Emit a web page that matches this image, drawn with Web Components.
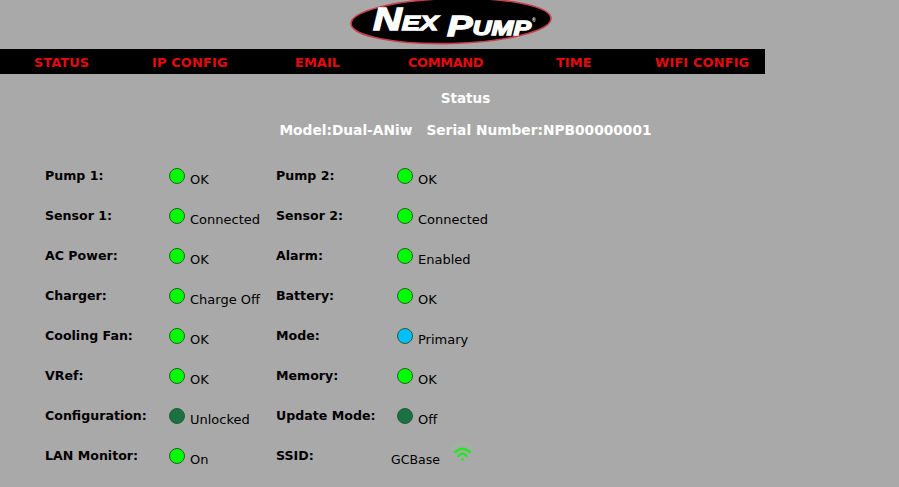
<!DOCTYPE html>
<html>
<head>
<meta charset="utf-8">
<style>
    html,body{margin:0;padding:0;background:#a9a9a9;}
    body{font-family:"DejaVu Sans",Verdana,sans-serif;height:487px;overflow:hidden;}
</style>
</head>
<body>
<np-header></np-header>
<np-nav>
    <a href="#" style="width:118px">STATUS</a>
    <a href="#" style="width:143px;letter-spacing:.1px">IP CONFIG</a>
    <a href="#" style="width:113px">EMAIL</a>
    <a href="#" style="width:148px;letter-spacing:-.45px">COMMAND</a>
    <a href="#" style="width:99px">TIME</a>
    <a href="#" style="letter-spacing:.1px">WIFI CONFIG</a>
</np-nav>
<np-title model="Dual-ANiw" serial="NPB00000001"></np-title>
<np-grid>
    <np-item label="Pump 1:" value="OK"></np-item>
    <np-item label="Pump 2:" value="OK"></np-item>
    <np-item label="Sensor 1:" value="Connected"></np-item>
    <np-item label="Sensor 2:" value="Connected"></np-item>
    <np-item label="AC Power:" value="OK"></np-item>
    <np-item label="Alarm:" value="Enabled"></np-item>
    <np-item label="Charger:" value="Charge Off"></np-item>
    <np-item label="Battery:" value="OK"></np-item>
    <np-item label="Cooling Fan:" value="OK"></np-item>
    <np-item label="Mode:" value="Primary" color="blue"></np-item>
    <np-item label="VRef:" value="OK"></np-item>
    <np-item label="Memory:" value="OK"></np-item>
    <np-item label="Configuration:" value="Unlocked" color="dark"></np-item>
    <np-item label="Update Mode:" value="Off" color="dark"></np-item>
    <np-item label="LAN Monitor:" value="On"></np-item>
    <np-ssid label="SSID:" value="GCBase"></np-ssid>
</np-grid>

<script>
const np_header = document.createElement('template');
np_header.innerHTML = `
    <style>
        :host{display:flex;justify-content:center;height:49px;padding-left:3px;}
        svg{display:block;}
        text{font-family:"Liberation Sans",Arial,sans-serif;font-weight:bold;font-style:italic;fill:#fff;}
    </style>
    <svg width="202" height="49" viewBox="0 0 202 49">
        <g transform="rotate(-1.5 101 21)">
            <ellipse cx="101" cy="21" rx="100" ry="22.5" fill="#000" stroke="#c8404c" stroke-width="1.6"/>
        </g>
        <text x="23" y="30" font-size="31" stroke="#fff" stroke-width="1.3" textLength="65" lengthAdjust="spacingAndGlyphs">N<tspan font-size="21">EX</tspan></text>
        <text x="97" y="36" font-size="29" stroke="#fff" stroke-width="1.3" textLength="84" lengthAdjust="spacingAndGlyphs">P<tspan font-size="20" dy="-1">UMP</tspan></text>
        <text x="182" y="22" font-size="5" style="font-style:normal">®</text>
    </svg>
`;
class npheader extends HTMLElement {
    constructor() {
        super();
        this.attachShadow({ mode: 'open' });
        this.shadowRoot.appendChild(np_header.content.cloneNode(true));
    }
}
window.customElements.define('np-header', npheader);

const np_nav = document.createElement('template');
np_nav.innerHTML = `
    <style>
        :host{display:flex;box-sizing:border-box;width:765px;height:25px;background:#000;padding:1px 0 0 34px;align-items:center;}
        ::slotted(a){color:#e30b0b;font:bold 13px "DejaVu Sans",Verdana,sans-serif;text-decoration:none;white-space:nowrap;}
    </style>
    <slot></slot>
`;
class npnav extends HTMLElement {
    constructor() {
        super();
        this.attachShadow({ mode: 'open' });
        this.shadowRoot.appendChild(np_nav.content.cloneNode(true));
    }
}
window.customElements.define('np-nav', npnav);

class nptitle extends HTMLElement {
    constructor() {
        super();
        this.attachShadow({ mode: 'open' });
        this.shadowRoot.innerHTML = `
            <style>
                :host{display:block;color:#fff;font-weight:bold;width:931px;text-align:center;}
                h1{font:inherit;font-size:13.5px;margin:0;padding-top:16px;line-height:17px;}
                p{margin:0;padding-top:15px;line-height:17px;font-size:13.75px;}
                span{margin-left:14px;}
            </style>
            <h1>Status</h1>
            <p>Model:${this.getAttribute('model')}<span>Serial Number:${this.getAttribute('serial')}</span></p>
        `;
    }
}
window.customElements.define('np-title', nptitle);

const np_grid = document.createElement('template');
np_grid.innerHTML = `
    <style>
        :host{display:grid;grid-template-columns:231px 300px;grid-auto-rows:40px;padding:28px 0 0 45px;}
    </style>
    <slot></slot>
`;
class npgrid extends HTMLElement {
    constructor() {
        super();
        this.attachShadow({ mode: 'open' });
        this.shadowRoot.appendChild(np_grid.content.cloneNode(true));
    }
}
window.customElements.define('np-grid', npgrid);

const np_item_css = `
    :host{display:flex;align-items:flex-start;height:40px;font-size:13px;color:#000;}
    :host(:nth-child(even)){--lab:121px;}
    .lab{width:var(--lab,124px);font-weight:bold;font-size:12.6px;line-height:17px;flex:none;}
    .val{line-height:17px;padding-top:4px;white-space:nowrap;}
`;
const np_colors = {
    green: '#00ff00',
    blue: '#00bfff',
    dark: '#1a7144'
};
class npitem extends HTMLElement {
    constructor() {
        super();
        this.attachShadow({ mode: 'open' });
        let cor = np_colors[this.getAttribute('color') || 'green'];
        this.shadowRoot.innerHTML = `
            <style>${np_item_css}
                .dot{width:14px;height:14px;border:1px solid #2a5a2a;border-radius:50%;background:${cor};margin:1px 5px 0 0;flex:none;}
            </style>
            <div class="lab">${this.getAttribute('label')}</div>
            <div class="dot"></div>
            <div class="val">${this.getAttribute('value')}</div>
        `;
    }
}
window.customElements.define('np-item', npitem);

class npssid extends HTMLElement {
    constructor() {
        super();
        this.attachShadow({ mode: 'open' });
        this.shadowRoot.innerHTML = `
            <style>${np_item_css}
                .lab{width:115px;}
                .val{width:60px;font-size:12.5px;}
                svg{display:block;margin-top:-8px;flex:none;}
            </style>
            <div class="lab">${this.getAttribute('label')}</div>
            <div class="val">${this.getAttribute('value')}</div>
            <svg width="24" height="24" viewBox="0 0 24 24" fill="none" stroke-linecap="round">
                <path d="M1.5 10 Q11.5 -1 21.5 10" stroke="#98bb98" stroke-width="1.8"/>
                <path d="M4 13 Q11.5 6.5 19 13" stroke="#22e822" stroke-width="2.6"/>
                <path d="M7.5 17 Q11.5 12 15.5 17" stroke="#22e822" stroke-width="2.4"/>
                <circle cx="11.5" cy="20.5" r="1.3" fill="#22e822"/>
            </svg>
        `;
    }
}
window.customElements.define('np-ssid', npssid);
</script>
</body>
</html>
